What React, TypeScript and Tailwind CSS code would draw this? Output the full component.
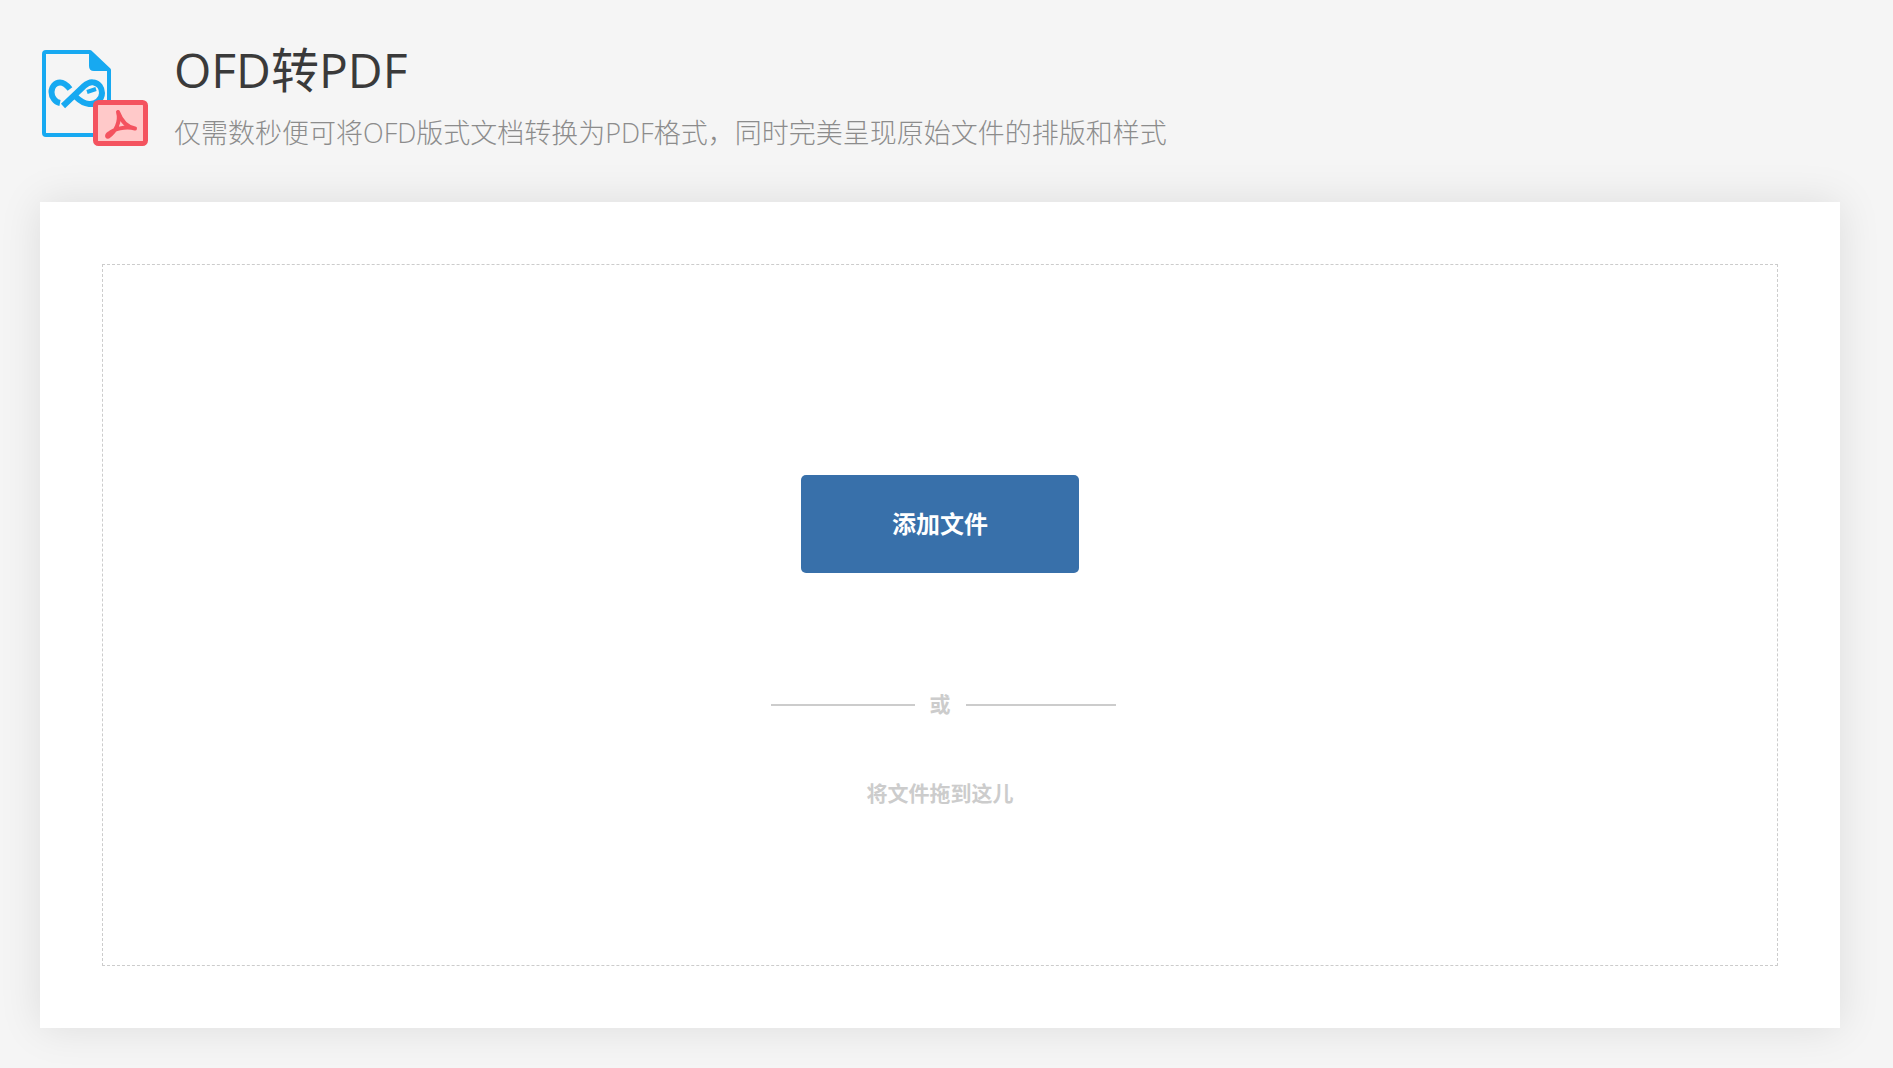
const font = "font-['Open_Sans','Noto_Sans_CJK_SC',sans-serif]";

const Logo = () => (
  <svg width="106" height="97" viewBox="0 0 106 97" fill="none">
    <path d="M4 2H48L67 20V83C67 84.200 66.200 85 65 85H4C2.800 85 2 84.200 2 83V4C2 2.800 2.800 2 4 2Z" stroke="#17a9f1" strokeWidth="4" strokeLinejoin="round" />
    <path d="M48 2L67 20H52C49.500 20 48 18.500 48 16Z" fill="#17a9f1" stroke="#17a9f1" strokeWidth="2" strokeLinejoin="round" />
    <path d="M28 39C24 34 21 32.500 18 32.500C13 32.500 9.500 37 9.500 42C9.500 47 13 52 18 53" stroke="#17a9f1" strokeWidth="6" />
    <path d="M21 56L42 36C46 32.500 49 31.500 52 32.500C57 33.500 60 38 60 43C60 50 53 54.500 47 54C42 53.500 38 51 34 47" stroke="#17a9f1" strokeWidth="6" />
    <path d="M45 42L54 39" stroke="#17a9f1" strokeWidth="4" />
    <rect x="53.500" y="52.500" width="50" height="41" rx="3" fill="#ffc9c9" stroke="#f4535f" strokeWidth="5" />
    <path d="M76 62C79 72 73 82 67 86C65 88 64 85.500 67 83.500C72 79 83 76 93 78.500M76 62C79 70 84 77 93 78.500" stroke="#f4535f" strokeWidth="4" strokeLinecap="round" />
  </svg>
);

const App = () => {
  return (
    <div className={`${font} min-h-screen bg-[#f5f5f5] pl-10 pr-[53px] pb-10`}>
      <header className="h-[202px] flex items-start">
        <div className="mt-[50px] ml-[2px] w-[132px] shrink-0">
          <Logo />
        </div>
        <div className="mt-[34px]">
          <h1 className="text-[48px] leading-[72px] font-normal text-[#3a3a3a]">OFD转PDF</h1>
          <p className="mt-[7px] text-[27px] leading-[40px] font-light text-[#8c8c8c]">
            仅需数秒便可将OFD版式文档转换为PDF格式，同时完美呈现原始文件的排版和样式
          </p>
        </div>
      </header>

      <main className="h-[826px] bg-white shadow-[0_0_40px_rgba(0,0,0,0.1)] p-[62px]">
        <div className="h-full border border-dashed border-[#ccc] flex flex-col items-center pt-[210px]">
          <button className="w-[278px] h-[98px] rounded-[5px] bg-[#3870aa] text-white text-[24px] font-bold">
            添加文件
          </button>
          <div className="mt-[116px] w-[380px] flex items-center text-[#ccc]">
            <div className="flex-1 flex justify-end pr-[15px] pt-[2px]">
              <span className="w-[144px] h-[2px] bg-[#ccc]" />
            </div>
            <span className="text-[21px] leading-[30px] font-bold">或</span>
            <div className="flex-1 flex pl-[15px] pt-[2px]">
              <span className="w-[150px] h-[2px] bg-[#ccc]" />
            </div>
          </div>
          <p className="mt-[59px] text-[21px] leading-[30px] font-bold text-[#ccc]">将文件拖到这儿</p>
        </div>
      </main>
    </div>
  );
};

export default App;
